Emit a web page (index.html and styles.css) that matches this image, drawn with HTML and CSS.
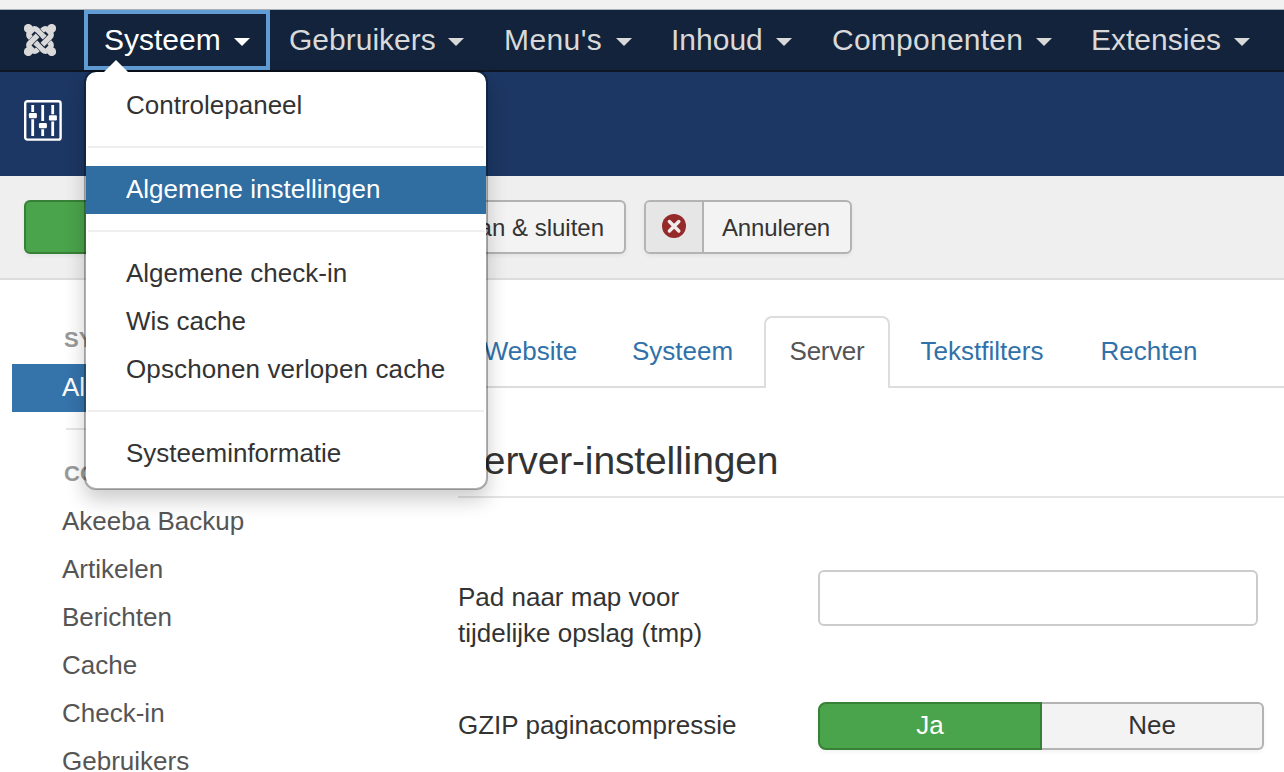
FILE: index.html
```html
<!DOCTYPE html>
<html lang="nl">
<head>
<meta charset="utf-8">
<title>Algemene instellingen</title>
<link rel="stylesheet" href="styles.css">
</head>
<body>
<nav class="navbar">
  <a class="brand" href="#">
    <svg width="32" height="32" viewBox="-16 -16 32 32" fill="none">
      <g fill="#d9d9d9"><circle cx="-11.7" cy="-11.7" r="4.4"/><circle cx="11.7" cy="-11.7" r="4.4"/><circle cx="-11.7" cy="11.7" r="4.4"/><circle cx="11.7" cy="11.7" r="4.4"/></g>
      <g transform="rotate(45)">
        <rect x="-12.6" y="-5" width="25.2" height="10" rx="3" stroke="#d9d9d9" stroke-width="5.4"/>
        <path d="M-4.8 -8V8M4.8 -8V8" stroke="#13233c" stroke-width="6.4"/>
        <rect x="-5" y="-12.6" width="10" height="25.2" rx="3" stroke="#d9d9d9" stroke-width="5.4"/>
        <path d="M-8.3 -4.8H-1.6M1.6 4.8H8.3" stroke="#13233c" stroke-width="6.4"/>
        <path d="M-9 -5H-1M1 5H9" stroke="#d9d9d9" stroke-width="5"/>
      </g>
    </svg>
  </a>
  <div class="nav-item nav-system open"><span>Systeem</span><i class="caret"></i>
    <div class="dropdown">
      <a>Controlepaneel</a>
      <hr>
      <a class="current">Algemene instellingen</a>
      <hr>
      <a>Algemene check-in</a>
      <a>Wis cache</a>
      <a class="wide">Opschonen verlopen cache</a>
      <hr>
      <a>Systeeminformatie</a>
    </div>
  </div>
  <div class="nav-item nav-users"><span>Gebruikers</span><i class="caret"></i></div>
  <div class="nav-item nav-menus"><span>Menu's</span><i class="caret"></i></div>
  <div class="nav-item nav-content"><span>Inhoud</span><i class="caret"></i></div>
  <div class="nav-item nav-components"><span>Componenten</span><i class="caret"></i></div>
  <div class="nav-item nav-extensions"><span>Extensies</span><i class="caret"></i></div>
</nav>
<header class="header">
  <svg width="38" height="41" viewBox="0 0 38 41" fill="none" stroke="#fff">
    <rect x="1.2" y="1.2" width="35.4" height="38.4" rx="2.2" stroke-width="2.4"/>
    <path stroke-width="2.8" d="M8.7 5v7M8.7 19.3V36M18.7 5v16M18.7 29.3V36M28.7 5v9.3M28.7 21.5V36"/>
    <g fill="#fff" stroke="none"><rect x="4.9" y="13" width="8" height="5.2" rx="1.2"/><rect x="14.9" y="23" width="8" height="5.2" rx="1.2"/><rect x="24.9" y="15.3" width="8" height="5.2" rx="1.2"/></g>
  </svg>
</header>
<div class="toolbar">
  <button class="btn btn-save"></button>
  <button class="btn btn-close">Opslaan &amp; sluiten</button>
  <button class="btn btn-cancel">
    <span class="btn-icon"><svg width="24" height="24" viewBox="0 0 24 24"><circle cx="12" cy="12" r="12" fill="#942a2a"/><path d="M7.4 7.6l9.4 9.4M16.8 7.6l-9.4 9.4" stroke="#f0eaea" stroke-width="3.5" stroke-linecap="round"/></svg></span>
    <span class="btn-label">Annuleren</span>
  </button>
</div>
<div class="page">
  <aside class="sidebar">
    <div class="side-head">SYSTEEM</div>
    <a class="selected">Algemene instellingen</a>
    <hr>
    <div class="side-head">COMPONENT</div>
    <a>Akeeba Backup</a>
    <a>Artikelen</a>
    <a>Berichten</a>
    <a>Cache</a>
    <a>Check-in</a>
    <a>Gebruikers</a>
  </aside>
  <main class="content">
    <div class="tabs">
      <a class="tab tab-site">Website</a>
      <a class="tab tab-system">Systeem</a>
      <a class="tab tab-server active">Server</a>
      <a class="tab tab-filters">Tekstfilters</a>
      <a class="tab tab-rights">Rechten</a>
    </div>
    <h3>Server-instellingen</h3>
    <div class="row row-path">
      <label>Pad naar map voor<br>tijdelijke opslag (tmp)</label>
      <input type="text">
    </div>
    <div class="row row-gzip">
      <label>GZIP paginacompressie</label>
      <div class="switch"><span class="yes">Ja</span><span class="no">Nee</span></div>
    </div>
  </main>
</div>
</body>
</html>
```
FILE: styles.css
```css
* { box-sizing: border-box; }
html { background: #fff; }
body {
  margin: 0;
  height: 772px;
  overflow: hidden;
  font: 26px/36px "Liberation Sans", Arial, sans-serif;
  color: #333;
}
.navbar {
  display: flex;
  height: 72px;
  margin: 0;
  background: #13233c;
  border-top: 9px solid #f1f1f1;
  border-bottom: 2px solid #0d1624;
  box-shadow: inset 0 1px #a9afb7;
  padding-top: 1px;
}
.brand { width: 84px; padding: 14px 0 0 24px; line-height: 0; }
.nav-item {
  position: relative;
  display: flex;
  justify-content: space-between;
  padding: 12px 20px 0 19px;
  height: 60px;
  font-size: 30px;
  color: #d9d9d9;
  white-space: nowrap;
}
.nav-system { width: 186px; }
.nav-users { width: 214px; }
.nav-menus { width: 168px; padding-left: 20px; }
.nav-menus span { letter-spacing: .4px; }
.nav-content { width: 160px; }
.nav-components { width: 260px; padding-left: 20px; }
.nav-components span { letter-spacing: .25px; }
.nav-extensions { width: 198px; }
.open { color: #fff; padding-left: 20px; box-shadow: inset 0 0 0 4px #609dd5; }
.caret {
  margin-top: 16px;
  height: 0;
  border: 8px solid transparent;
  border-top-color: currentColor;
  border-bottom: 0;
}
.dropdown {
  position: absolute;
  z-index: 5;
  left: 0;
  top: 60px;
  width: 404px;
  height: 420px;
  padding: 10px 0;
  background: #fff;
  background-clip: padding-box;
  border: 2px solid rgba(0, 0, 0, .3);
  border-radius: 12px;
  box-shadow: 0 10px 20px rgba(0, 0, 0, .2);
  font-size: 26px;
  color: #333;
}
.dropdown::before {
  content: "";
  position: absolute;
  left: 18px;
  top: -12px;
  border: 12px solid transparent;
  border-top: 0;
  border-bottom-color: #fff;
}
.dropdown a { display: block; height: 48px; padding-left: 40px; line-height: 47px; }
.dropdown .wide { letter-spacing: .12px; }
.dropdown hr { height: 2px; margin: 16px 2px 18px; border: 0; background: #efefef; }
.dropdown .current { background: #306da1; color: #fff; }
.header { height: 104px; padding: 28px 24px; background: #1c3763; line-height: 0; }
.toolbar {
  display: flex;
  height: 104px;
  padding: 24px;
  background: #efefef;
  border-bottom: 2px solid #ddd;
}
.btn {
  height: 54px;
  padding: 0;
  border: 2px solid #b3b3b3;
  border-radius: 6px;
  background: #f3f3f3;
  box-shadow: 0 2px 4px rgba(0, 0, 0, .05);
  font: 24px/52px "Liberation Sans", Arial, sans-serif;
  color: #333;
}
.btn-save { width: 298px; background: #4aa44b; border-color: #378137; }
.btn-close { width: 286px; margin: 0 18px; padding: 2px 20px 0 0; line-height: 48px; text-align: right; }
.btn-cancel { display: flex; width: 208px; overflow: hidden; text-align: left; }
.btn-icon { flex: none; width: 56px; height: 50px; padding: 12px 0 0 16px; background: #e6e6e6; line-height: 0; }
.btn-label { flex: 1; height: 50px; padding-left: 18px; border-left: 2px solid #b3b3b3; letter-spacing: -.15px; }
.page { display: flex; }
.sidebar { width: 458px; padding: 36px 0 0 12px; color: #555; }
.side-head { height: 48px; padding-left: 52px; font-size: 22px; font-weight: bold; line-height: 48px; color: #999; }
.sidebar a { display: block; width: 420px; height: 48px; padding-left: 50px; line-height: 47px; }
.sidebar .selected { background: #3573ab; color: #fff; }
.sidebar hr { height: 2px; width: 366px; margin: 16px 0 20px 54px; border: 0; background: #e5e5e5; }
.content { flex: 1; padding-top: 36px; }
.tabs { display: flex; height: 72px; border-bottom: 2px solid #ddd; }
.tab { height: 70px; line-height: 71px; text-align: center; color: #3071a9; }
.tab-site { width: 145px; }
.tab-system { width: 153px; margin-left: 3px; }
.tab-server { width: 126px; margin: 0 4px 0 5px; letter-spacing: -.3px; }
.tab-filters { width: 176px; }
.tab-rights { width: 150px; margin-left: 4px; }
.tab.active {
  height: 72px;
  line-height: 67px;
  border: 2px solid #ddd;
  border-bottom: 0;
  border-radius: 8px 8px 0 0;
  background: #fff;
  color: #555;
}
h3 {
  height: 74px;
  margin: 36px 0 72px;
  border-bottom: 2px solid #e5e5e5;
  font-size: 39px;
  font-weight: normal;
  letter-spacing: -.14px;
  line-height: 74px;
}
.row { display: flex; }
.row label { width: 360px; }
.row-path { height: 132px; }
.row-path label { padding-top: 9px; }
.row-gzip label { padding-top: 5px; }
input { width: 440px; height: 56px; border: 2px solid #ccc; border-radius: 6px; background: #fff; }
.switch { display: flex; height: 48px; text-align: center; line-height: 43px; }
.switch span { border: 2px solid; box-shadow: 0 2px 4px rgba(0, 0, 0, .05); }
.switch .yes { width: 224px; background: #4aa44b; border-color: #378137; border-radius: 8px 0 0 8px; color: #fff; }
.switch .no { width: 222px; background: #f3f3f3; border-color: #b3b3b3; border-left: 0; border-radius: 0 6px 6px 0; }
```
